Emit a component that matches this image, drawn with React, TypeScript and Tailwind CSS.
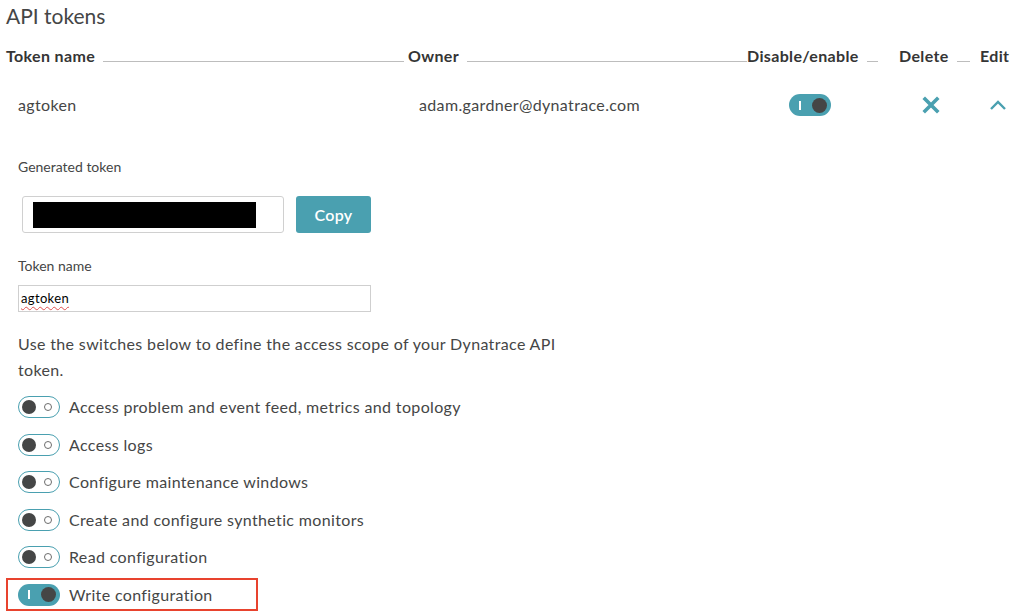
import React from "react";

const TEAL = "bg-[#4aa0b0]";

function OffToggle() {
  return (
    <div className="w-[42px] h-[22px] rounded-full border-[1.5px] border-[#4aa0b0] bg-white flex items-center justify-between px-[3px] shrink-0">
      <div className="w-[14px] h-[14px] rounded-full bg-[#454646]" />
      <div className="w-[8px] h-[8px] rounded-full border-[1.5px] border-[#6d6d6d] mr-[4px]" />
    </div>
  );
}

function OnToggle() {
  return (
    <div className={`w-[42px] h-[22px] rounded-full ${TEAL} flex items-center justify-between px-[4px] shrink-0`}>
      <div className="w-[1.5px] h-[9px] bg-white ml-[6px]" />
      <div className="w-[15px] h-[15px] rounded-full bg-[#454646]" />
    </div>
  );
}

export default function App() {
  const scopes = [
    "Access problem and event feed, metrics and topology",
    "Access logs",
    "Configure maintenance windows",
    "Create and configure synthetic monitors",
    "Read configuration",
  ];
  return (
    <div
      className="w-[1024px] h-[615px] bg-white text-[#454646] overflow-hidden tracking-[0.35px]"
      style={{ fontFamily: "Lato, 'Open Sans', sans-serif" }}
    >
      <div className="pl-[6px] pt-[2px] text-[21px] leading-[28px] text-[#454646] tracking-normal">API tokens</div>

      {/* header */}
      <div className="flex items-end pl-[6px] mt-[14px] h-[24px] text-[16px] font-bold text-[#353535]">
        <div className="w-[402px] flex items-end">
          <span>Token name</span>
          <div className="flex-1 h-px bg-[#bdbdbd] ml-[8px] mr-[4px] mb-[6px]" />
        </div>
        <div className="w-[339px] flex items-end">
          <span>Owner</span>
          <div className="flex-1 h-px bg-[#bdbdbd] ml-[8px] mb-[6px]" />
        </div>
        <div className="w-[152px] flex items-end">
          <span>Disable/enable</span>
          <div className="w-[11px] h-px bg-[#bdbdbd] ml-[8px] mb-[6px]" />
        </div>
        <div className="w-[81px] flex items-end">
          <span>Delete</span>
          <div className="w-[13px] h-px bg-[#bdbdbd] ml-[8px] mb-[6px]" />
        </div>
        <div>
          <span>Edit</span>
        </div>
      </div>

      {/* token row */}
      <div className="flex items-center h-[22px] mt-[26px] text-[16px]">
        <div className="w-[419px] pl-[18px]">agtoken</div>
        <div className="w-[370px]">adam.gardner@dynatrace.com</div>
        <OnToggle />
        <div className="w-[109px] flex justify-end">
          <svg width="18" height="18" viewBox="0 0 18 18">
            <path d="M3 3 L15 15 M15 3 L3 15" stroke="#4aa0b0" strokeWidth="3.6" strokeLinecap="square" />
          </svg>
        </div>
        <div className="w-[67px] flex justify-end">
          <svg width="18" height="12" viewBox="0 0 18 12">
            <path d="M2 10 L9 3 L16 10" stroke="#4aa0b0" strokeWidth="2.4" fill="none" />
          </svg>
        </div>
      </div>

      {/* details */}
      <div className="pl-[18px]">
        <div className="mt-[42px] text-[14px] leading-[18px] tracking-normal">Generated token</div>
        <div className="flex items-center mt-[20px]">
          <div className="ml-[4px] w-[262px] h-[37px] border border-[#d0d0d0] rounded-[3px] flex items-center pl-[10px]">
            <div className="w-[223px] h-[26px] bg-black" />
          </div>
          <button className={`ml-[12px] w-[75px] h-[37px] rounded-[3px] ${TEAL} text-white text-[16px] font-semibold`}>
            Copy
          </button>
        </div>
        <div className="mt-[24px] text-[14px] leading-[18px] tracking-normal">Token name</div>
        <div className="mt-[10px] w-[353px] h-[27px] border border-[#cfcfcf] flex items-center pl-[2px] text-[13px] text-black">
          <span className="underline decoration-wavy decoration-[#e05050] decoration-1 underline-offset-[3px]">agtoken</span>
        </div>
        <div className="mt-[19px] w-[570px] text-[16px] leading-[26px]">
          Use the switches below to define the access scope of your Dynatrace API token.
        </div>
        <div className="mt-[13px] flex flex-col gap-[15.5px]">
          {scopes.map((s) => (
            <div key={s} className="flex items-center h-[22px] text-[16px]">
              <OffToggle />
              <span className="ml-[9px]">{s}</span>
            </div>
          ))}
        </div>
      </div>
      <div className="ml-[6px] mt-[10px] w-[252px] h-[33px] border-2 border-[#e8432e] flex items-center pl-[10px] text-[16px]">
        <OnToggle />
        <span className="ml-[9px]">Write configuration</span>
      </div>
    </div>
  );
}
